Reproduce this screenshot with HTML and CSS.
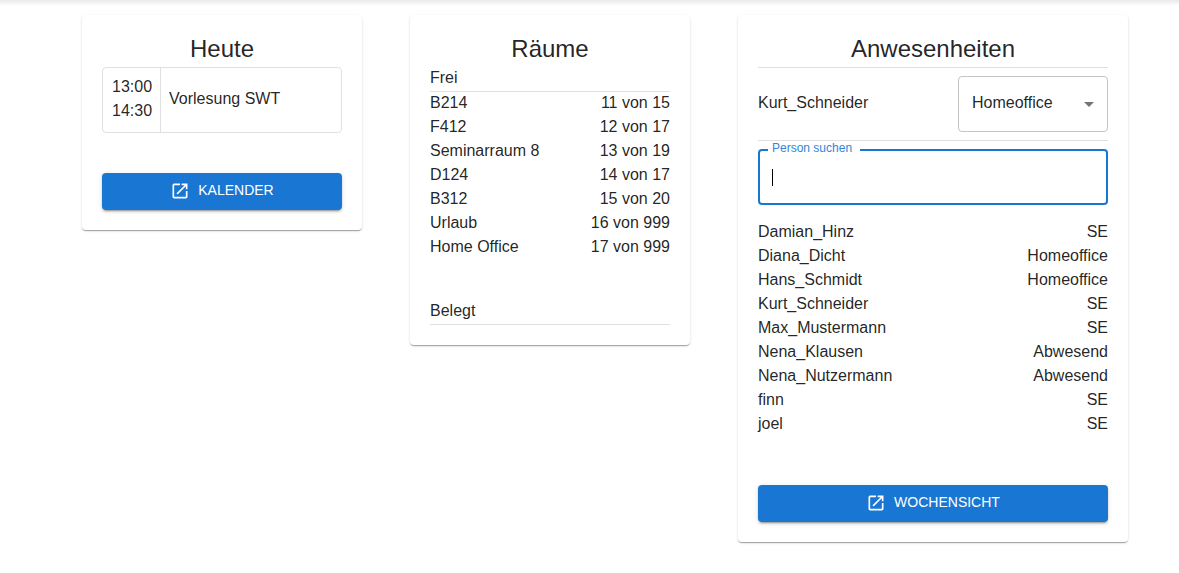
FILE: index.html
```html
<!DOCTYPE html>
<html lang="de">
<head>
<meta charset="utf-8">
<meta name="viewport" content="width=device-width, initial-scale=1">
<title>Dashboard</title>
<link rel="stylesheet" href="styles.css">
</head>
<body>
<div class="top-shadow"></div>
<main class="dashboard">
  <section class="card">
    <h2 class="card-title">Heute</h2>
    <div class="event">
      <div class="event-time"><time class="line">13:00</time><time class="line">14:30</time></div>
      <div class="event-name line">Vorlesung SWT</div>
    </div>
    <button class="button" type="button">
      <svg class="button-icon" viewBox="0 0 24 24" aria-hidden="true"><path d="M19 19H5V5h7V3H5c-1.110 0-2 .9-2 2v14c0 1.100.890 2 2 2h14c1.100 0 2-.9 2-2v-7h-2v7zM14 3v2h3.590l-9.830 9.830 1.410 1.410L19 6.410V10h2V3h-7z"/></svg>
      <span class="line">KALENDER</span>
    </button>
  </section>

  <section class="card">
    <h2 class="card-title">Räume</h2>
    <h3 class="group-title">Frei</h3>
    <table class="list">
      <tr><td>B214</td><td>11 von 15</td></tr>
      <tr><td>F412</td><td>12 von 17</td></tr>
      <tr><td>Seminarraum 8</td><td>13 von 19</td></tr>
      <tr><td>D124</td><td>14 von 17</td></tr>
      <tr><td>B312</td><td>15 von 20</td></tr>
      <tr><td>Urlaub</td><td>16 von 999</td></tr>
      <tr><td>Home Office</td><td>17 von 999</td></tr>
    </table>
    <h3 class="group-title group-title-spaced">Belegt</h3>
  </section>

  <section class="card card-wide">
    <h2 class="card-title">Anwesenheiten</h2>
    <div class="own-status">
      <label class="line" for="status">Kurt_Schneider</label>
      <div class="select">
        <select id="status" class="select-input">
          <option selected>Homeoffice</option>
          <option>SE</option>
          <option>Abwesend</option>
        </select>
        <svg class="select-arrow" viewBox="0 0 24 24" aria-hidden="true"><path d="M7 10l5 5 5-5z"/></svg>
      </div>
    </div>
    <div class="search">
      <label class="search-label" for="search">Person suchen</label>
      <input class="search-input" id="search" type="text" autocomplete="off" autofocus>
      <span class="search-caret" aria-hidden="true"></span>
    </div>
    <table class="list">
      <tr><td>Damian_Hinz</td><td>SE</td></tr>
      <tr><td>Diana_Dicht</td><td>Homeoffice</td></tr>
      <tr><td>Hans_Schmidt</td><td>Homeoffice</td></tr>
      <tr><td>Kurt_Schneider</td><td>SE</td></tr>
      <tr><td>Max_Mustermann</td><td>SE</td></tr>
      <tr><td>Nena_Klausen</td><td>Abwesend</td></tr>
      <tr><td>Nena_Nutzermann</td><td>Abwesend</td></tr>
      <tr><td>finn</td><td>SE</td></tr>
      <tr><td>joel</td><td>SE</td></tr>
    </table>
    <button class="button button-low" type="button">
      <svg class="button-icon" viewBox="0 0 24 24" aria-hidden="true"><path d="M19 19H5V5h7V3H5c-1.110 0-2 .9-2 2v14c0 1.100.890 2 2 2h14c1.100 0 2-.9 2-2v-7h-2v7zM14 3v2h3.590l-9.830 9.830 1.410 1.410L19 6.410V10h2V3h-7z"/></svg>
      <span class="line">WOCHENSICHT</span>
    </button>
  </section>
</main>
</body>
</html>
```
FILE: styles.css
```css
* {
  box-sizing: border-box;
}

body {
  margin: 0;
  background: #fff;
  color: rgba(0, 0, 0, 0.87);
  font-family: "Liberation Sans", Arial, sans-serif;
  font-size: 16px;
  line-height: 22px;
}

.top-shadow {
  height: 7px;
  background: linear-gradient(#e9e9e9, #fff 6px);
}

.dashboard {
  display: flex;
  flex-wrap: wrap;
  justify-content: center;
  align-items: flex-start;
  gap: 48px;
  padding: 8px 0 24px 31px;
}

.card {
  flex: 0 1 280px;
  padding: 20px;
  border-radius: 4px;
  background: #fff;
  box-shadow: 0 2px 1px -1px rgba(0, 0, 0, 0.2), 0 1px 1px 0 rgba(0, 0, 0, 0.14), 0 1px 3px 0 rgba(0, 0, 0, 0.12);
}

.card-wide {
  flex-basis: 390px;
}

.card-title {
  margin: 0;
  padding-bottom: 4px;
  font-size: 24px;
  font-weight: 400;
  line-height: 28px;
  text-align: center;
}

.line {
  padding-bottom: 2px;
}

.event {
  display: flex;
  border: 1px solid #e0e0e0;
  border-radius: 4px;
}

.event-time {
  display: flex;
  flex-direction: column;
  padding: 8px 8px 8px 9px;
  border-right: 1px solid #e0e0e0;
}

.event-name {
  align-self: center;
  padding-left: 8px;
  padding-right: 8px;
}

.button {
  display: flex;
  align-items: center;
  justify-content: center;
  gap: 8px;
  width: 100%;
  margin-top: 40px;
  padding: 6px 16px 7px;
  border: 0;
  border-radius: 4px;
  background: #1976d2;
  box-shadow: 0 3px 1px -2px rgba(0, 0, 0, 0.2), 0 2px 2px 0 rgba(0, 0, 0, 0.14), 0 1px 5px 0 rgba(0, 0, 0, 0.12);
  color: #fff;
  font-family: inherit;
  font-size: 14px;
  line-height: 22px;
  cursor: pointer;
}

.button-low {
  margin-top: 48px;
}

.button-icon {
  width: 20px;
  height: 20px;
  fill: currentColor;
}

.group-title {
  margin: 0;
  padding-bottom: 2px;
  border-bottom: 1px solid #e0e0e0;
  font-size: 16px;
  font-weight: 400;
}

.group-title-spaced {
  margin-top: 40px;
}

.list {
  width: 100%;
  border-collapse: collapse;
}

.list td {
  padding: 0 0 2px;
}

.list td:last-child {
  text-align: right;
}

.own-status {
  display: flex;
  align-items: center;
  justify-content: space-between;
  padding: 8px 0;
  border-top: 1px solid #e0e0e0;
  border-bottom: 1px solid #e0e0e0;
}

.select {
  position: relative;
  width: 150px;
}

.select-input {
  width: 100%;
  height: 56px;
  padding: 0 32px 2px 13px;
  border: 1px solid #c4c4c4;
  border-radius: 4px;
  background: #fff;
  color: inherit;
  font: inherit;
  appearance: none;
}

.select-arrow {
  position: absolute;
  top: 16px;
  right: 7px;
  width: 24px;
  height: 24px;
  fill: rgba(0, 0, 0, 0.54);
  pointer-events: none;
}

.search {
  position: relative;
  margin: 8px 0 16px;
}

.search-label {
  position: absolute;
  top: -8px;
  left: 10px;
  padding: 0 8px 0 4px;
  background: #fff;
  color: #3485d7;
  font-size: 12px;
  line-height: 14px;
}

.search-input {
  display: block;
  width: 100%;
  height: 56px;
  padding: 0 12px;
  border: 2px solid #1976d2;
  border-radius: 4px;
  outline: 0;
  background: #fff;
  color: inherit;
  font: inherit;
  caret-color: transparent;
}

.search-caret {
  position: absolute;
  top: 20px;
  left: 14px;
  width: 1px;
  height: 17px;
  background: #000;
}
```
